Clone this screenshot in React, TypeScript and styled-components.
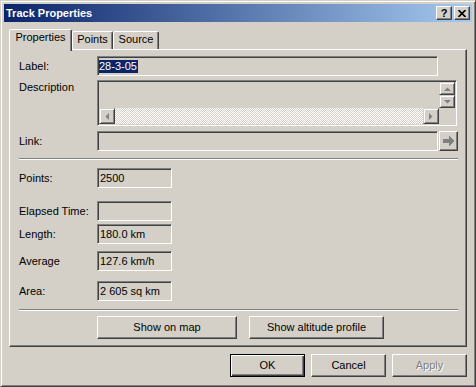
import styled, { createGlobalStyle } from "styled-components";

const GlobalStyle = createGlobalStyle`
  html, body {
    margin: 0;
    padding: 0;
    background: #d4d0c8;
  }
  body {
    font: 11px "Liberation Sans", Arial, sans-serif;
    color: #000;
  }
`;

const Window = styled.div`
  box-sizing: border-box;
  width: 476px;
  height: 387px;
  background: #d4d0c8;
  border: 1px solid;
  border-color: #d4d0c8 #404040 #404040 #d4d0c8;
  box-shadow: inset 1px 1px #fff, inset -1px -1px #808080;
  padding: 3px;
  display: flex;
  flex-direction: column;
`;

const TitleBar = styled.div`
  height: 18px;
  flex: none;
  display: flex;
  align-items: center;
  padding: 0 2px 0 2px;
  background: linear-gradient(to right, #0a246a, #a6caf0);
`;

const Title = styled.div`
  flex: 1;
  color: #fff;
  font-weight: bold;
  font-size: 11px;
  line-height: 13px;
`;

const CaptionButtons = styled.div`
  display: flex;
  gap: 2px;
`;

const CaptionButton = styled.div`
  box-sizing: border-box;
  width: 16px;
  height: 14px;
  background: #d4d0c8;
  border: 1px solid;
  border-color: #fff #404040 #404040 #fff;
  box-shadow: inset -1px -1px #808080;
  display: flex;
  align-items: center;
  justify-content: center;
  font-weight: bold;
  font-size: 11px;
  line-height: 11px;
`;

const TabRow = styled.div`
  display: flex;
  align-items: flex-end;
  height: 20px;
  margin-top: 7px;
  padding-left: 5px;
  position: relative;
  z-index: 2;
`;

const Tab = styled.div<{ $active?: boolean; $w: number }>`
  box-sizing: border-box;
  width: ${(p) => p.$w}px;
  height: ${(p) => (p.$active ? 22 : 18)}px;
  margin-bottom: ${(p) => (p.$active ? -2 : 0)}px;
  border: 1px solid;
  border-bottom: none;
  border-color: #fff #404040 transparent #fff;
  border-radius: 2px 2px 0 0;
  box-shadow: inset -1px 0 #808080;
  background: #d4d0c8;
  text-align: center;
  line-height: 13px;
  padding-top: 1px;
`;

const Panel = styled.div`
  box-sizing: border-box;
  margin: 0 5px;
  border: 1px solid;
  border-color: #fff #404040 #404040 #fff;
  box-shadow: inset -1px -1px #808080;
  padding: 6px 8px 7px 9px;
  display: flex;
  flex-direction: column;
`;

const Row = styled.div<{ $mt?: number; $top?: boolean }>`
  display: flex;
  align-items: ${(p) => (p.$top ? "flex-start" : "center")};
  margin-top: ${(p) => p.$mt ?? 0}px;
`;

const Label = styled.div<{ $pt?: number }>`
  width: 78px;
  flex: none;
  line-height: 13px;
  padding-top: ${(p) => p.$pt ?? 0}px;
`;

const Field = styled.div<{ $w: number; $h?: number }>`
  box-sizing: border-box;
  width: ${(p) => p.$w}px;
  height: ${(p) => p.$h ?? 20}px;
  background: #d4d0c8;
  border: 1px solid;
  border-color: #808080 #fff #fff #808080;
  box-shadow: inset 1px 1px #404040, inset -1px -1px #d4d0c8;
  padding: 0 2px;
  display: flex;
  align-items: center;
  line-height: 13px;
  white-space: nowrap;
`;

const Selected = styled.span`
  background: #0a246a;
  color: #fff;
  padding: 0 1px 0 0;
  margin-left: -1px;
`;

const DescBox = styled.div`
  box-sizing: border-box;
  width: 360px;
  height: 46px;
  border: 1px solid;
  border-color: #808080 #fff #fff #808080;
  box-shadow: inset 1px 1px #404040, inset -1px -1px #d4d0c8;
  padding: 1px;
  display: grid;
  grid-template-columns: 1fr 16px;
  grid-template-rows: 1fr 16px;
`;

const VScroll = styled.div`
  display: flex;
  flex-direction: column;
`;

const HScroll = styled.div`
  display: flex;
`;

const Track = styled.div`
  flex: 1;
  background-image: repeating-conic-gradient(#fff 0 25%, #d4d0c8 0 50%);
  background-size: 2px 2px;
`;

const ScrollButton = styled.div<{ $h?: number }>`
  box-sizing: border-box;
  width: 16px;
  height: ${(p) => p.$h ?? 16}px;
  flex: none;
  background: #d4d0c8;
  border: 1px solid;
  border-color: #d4d0c8 #404040 #404040 #d4d0c8;
  box-shadow: inset 1px 1px #fff, inset -1px -1px #808080;
  display: flex;
  align-items: center;
  justify-content: center;
`;

const LinkButton = styled(ScrollButton)`
  width: 19px;
  height: 20px;
  margin-left: 1px;
  border-color: #fff #404040 #404040 #fff;
  box-shadow: inset -1px -1px #808080;
`;

const Separator = styled.div<{ $mt: number }>`
  margin-top: ${(p) => p.$mt}px;
  border-top: 1px solid #808080;
  border-bottom: 1px solid #fff;
  height: 0;
`;

const Button = styled.div<{ $w?: number; $default?: boolean; $disabled?: boolean }>`
  box-sizing: border-box;
  width: ${(p) => p.$w ?? 75}px;
  height: 23px;
  flex: none;
  background: #d4d0c8;
  display: flex;
  align-items: center;
  justify-content: center;
  line-height: 13px;
  border: 1px solid;
  border-color: ${(p) => (p.$default ? "#000" : "#fff #404040 #404040 #fff")};
  box-shadow: ${(p) =>
    p.$default
      ? "inset 1px 1px #fff, inset -1px -1px #404040, inset -2px -2px #808080"
      : "inset -1px -1px #808080"};
  color: ${(p) => (p.$disabled ? "#808080" : "#000")};
  text-shadow: ${(p) => (p.$disabled ? "1px 1px #fff" : "none")};
`;

const ButtonRow = styled.div<{ $mt: number }>`
  display: flex;
  gap: 12px;
  margin-top: ${(p) => p.$mt}px;
  padding-left: 78px;
`;

const Footer = styled.div`
  display: flex;
  justify-content: flex-end;
  gap: 6px;
  margin: 7px 5px 0 0;
`;

const UpArrow = () => (
  <svg width="7" height="4" viewBox="0 0 7 4">
    <polygon points="0,4 7,4 3.5,0.5" fill="#808080" />
  </svg>
);

const DownArrow = () => (
  <svg width="7" height="4" viewBox="0 0 7 4">
    <polygon points="0,0 7,0 3.5,3.5" fill="#808080" />
  </svg>
);

const LeftArrow = () => (
  <svg width="4" height="7" viewBox="0 0 4 7">
    <polygon points="4,0 4,7 0.5,3.5" fill="#808080" />
  </svg>
);

const RightArrow = () => (
  <svg width="4" height="7" viewBox="0 0 4 7">
    <polygon points="0,0 0,7 3.5,3.5" fill="#808080" />
  </svg>
);

const GoArrow = () => (
  <svg width="12" height="10" viewBox="0 0 12 10" shapeRendering="crispEdges">
    <polygon points="0,3 6,3 6,0 11,5 6,10 6,7 0,7" fill="#808080" />
  </svg>
);

const CloseGlyph = () => (
  <svg width="8" height="7" viewBox="0 0 8 7">
    <path d="M0.5 0 L7.5 7 M7.5 0 L0.5 7" stroke="#000" strokeWidth="1.6" />
  </svg>
);

const stats: { label: string; value: string; mt: number }[] = [
  { label: "Points:", value: "2500", mt: 8 },
  { label: "Elapsed Time:", value: "", mt: 13 },
  { label: "Length:", value: "180.0 km", mt: 3 },
  { label: "Average", value: "127.6 km/h", mt: 7 },
  { label: "Area:", value: "2 605 sq km", mt: 10 },
];

export default function App() {
  return (
    <>
      <GlobalStyle />
      <Window>
        <TitleBar>
          <Title>Track Properties</Title>
          <CaptionButtons>
            <CaptionButton>?</CaptionButton>
            <CaptionButton>
              <CloseGlyph />
            </CaptionButton>
          </CaptionButtons>
        </TitleBar>

        <TabRow>
          <Tab $active $w={63}>
            Properties
          </Tab>
          <Tab $w={41}>Points</Tab>
          <Tab $w={46}>Source</Tab>
        </TabRow>

        <Panel>
          <Row>
            <Label>Label:</Label>
            <Field $w={341}>
              <Selected>28-3-05</Selected>
            </Field>
          </Row>

          <Row $mt={4} $top>
            <Label $pt={1}>Description</Label>
            <DescBox>
              <div />
              <VScroll>
                <ScrollButton $h={13}>
                  <UpArrow />
                </ScrollButton>
                <ScrollButton $h={13}>
                  <DownArrow />
                </ScrollButton>
              </VScroll>
              <HScroll>
                <ScrollButton>
                  <LeftArrow />
                </ScrollButton>
                <Track />
                <ScrollButton>
                  <RightArrow />
                </ScrollButton>
              </HScroll>
              <div />
            </DescBox>
          </Row>

          <Row $mt={5}>
            <Label>Link:</Label>
            <Field $w={341} />
            <LinkButton>
              <GoArrow />
            </LinkButton>
          </Row>

          <Separator $mt={7} />

          {stats.map((s) => (
            <Row key={s.label} $mt={s.mt}>
              <Label>{s.label}</Label>
              <Field $w={75}>{s.value}</Field>
            </Row>
          ))}

          <Separator $mt={8} />

          <ButtonRow $mt={5}>
            <Button $w={140}>Show on map</Button>
            <Button $w={135}>Show altitude profile</Button>
          </ButtonRow>
        </Panel>

        <Footer>
          <Button $default>OK</Button>
          <Button>Cancel</Button>
          <Button $disabled>Apply</Button>
        </Footer>
      </Window>
    </>
  );
}
